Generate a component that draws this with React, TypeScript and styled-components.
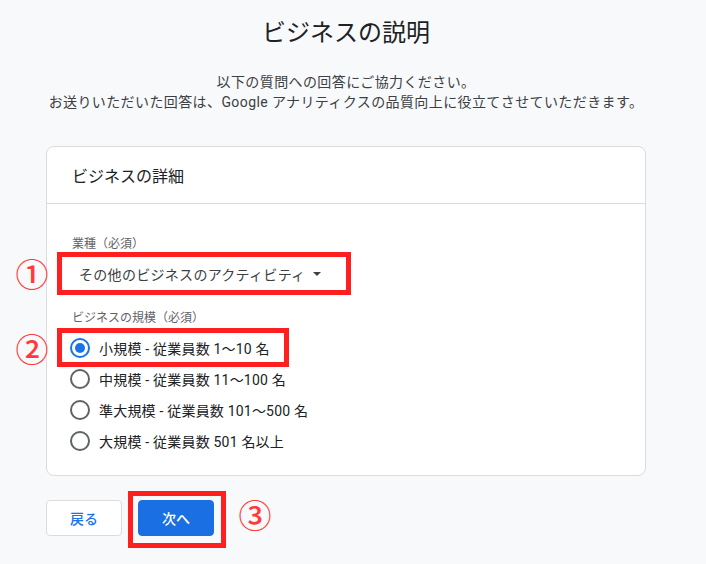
import React from "react";
import styled, { createGlobalStyle } from "styled-components";

const Global = createGlobalStyle`
  html, body { margin: 0; padding: 0; background: #f8f9fa; }
  body {
    font-family: Roboto, "Noto Sans CJK JP", "Noto Sans", sans-serif;
    color: #202124;
  }
  * { box-sizing: border-box; }
`;

const Page = styled.div`
  width: 706px;
  height: 564px;
  padding: 17px 0 0 46px;
  overflow: hidden;
`;

const Column = styled.div`
  width: 600px;
  display: flex;
  flex-direction: column;
`;

const Title = styled.h1`
  margin: 0;
  font-size: 24px;
  line-height: 32px;
  font-weight: 400;
  text-align: center;
  color: #202124;
`;

const Intro = styled.p`
  margin: 23px 0 0;
  font-size: 14px;
  line-height: 20px;
  letter-spacing: 0.4px;
  text-align: center;
  color: #3c4043;
`;

const Card = styled.section`
  margin-top: 34px;
  background: #fff;
  border: 1px solid #dadce0;
  border-radius: 8px;
`;

const CardHeader = styled.div`
  height: 57px;
  display: flex;
  align-items: center;
  padding: 0 25px;
  border-bottom: 1px solid #dadce0;
  font-size: 16px;
  color: #202124;
`;

const CardBody = styled.div`
  padding: 32px 25px 19px;
  display: flex;
  flex-direction: column;
  align-items: flex-start;
`;

const FieldLabel = styled.div<{ $gap?: number }>`
  font-size: 12px;
  line-height: 16px;
  color: #5f6368;
  margin-top: ${(p) => p.$gap ?? 0}px;
`;

const Highlight = styled.div<{ $inset: string; $mt?: number }>`
  position: relative;
  display: flex;
  width: fit-content;
  margin-top: ${(p) => p.$mt ?? 0}px;
  &::after {
    content: "";
    position: absolute;
    inset: ${(p) => p.$inset};
    border: 5px solid #ff1f1f;
    pointer-events: none;
  }
`;

const Marker = styled.span<{ $x: number; $y: number }>`
  position: absolute;
  left: ${(p) => p.$x}px;
  top: ${(p) => p.$y}px;
  transform: translate(-50%, -50%);
  font-family: "Noto Sans CJK JP", sans-serif;
  font-size: 33px;
  font-weight: 500;
  line-height: 1;
  color: #ff3a3a;
  white-space: nowrap;
`;

const Dropdown = styled.button`
  height: 36px;
  display: flex;
  align-items: center;
  gap: 8px;
  padding: 0 20px 0 7px;
  border: none;
  background: transparent;
  font-family: inherit;
  font-size: 14px;
  letter-spacing: 0.3px;
  color: #3c4043;
  cursor: pointer;
`;

const RadioList = styled.div`
  margin: 6px 0 0 -2px;
  display: flex;
  flex-direction: column;
`;

const RadioRow = styled.label`
  height: 31px;
  display: flex;
  align-items: center;
  gap: 9px;
  font-size: 14px;
  letter-spacing: 0.2px;
  color: #202124;
  cursor: pointer;
`;

const RadioCircle = styled.span<{ $checked?: boolean }>`
  width: 20px;
  height: 20px;
  border-radius: 50%;
  border: 2px solid ${(p) => (p.$checked ? "#1a73e8" : "#5f6368")};
  display: flex;
  align-items: center;
  justify-content: center;
  &::after {
    content: "";
    width: 10px;
    height: 10px;
    border-radius: 50%;
    background: ${(p) => (p.$checked ? "#1a73e8" : "transparent")};
  }
`;

const Actions = styled.div`
  margin-top: 24px;
  display: flex;
  gap: 16px;
`;

const Button = styled.button<{ $primary?: boolean }>`
  width: 76px;
  height: 36px;
  border-radius: 4px;
  border: 1px solid ${(p) => (p.$primary ? "#1a6fe3" : "#dadce0")};
  background: ${(p) => (p.$primary ? "#1a6fe3" : "#fff")};
  color: ${(p) => (p.$primary ? "#fff" : "#1a73e8")};
  font-family: inherit;
  font-size: 14px;
  font-weight: 500;
  cursor: pointer;
`;

const sizes = [
  { name: "小規模", detail: "従業員数 1〜10 名" },
  { name: "中規模", detail: "従業員数 11〜100 名" },
  { name: "準大規模", detail: "従業員数 101〜500 名" },
  { name: "大規模", detail: "従業員数 501 名以上" },
];

const Caret = () => (
  <svg width="8" height="4" viewBox="0 0 8 4">
    <path d="M0 0 L8 0 L4 4 Z" fill="#3c4043" />
  </svg>
);

export default function App() {
  const selected = 0;
  return (
    <>
      <Global />
      <Page>
        <Column>
          <Title>ビジネスの説明</Title>
          <Intro>
            以下の質問への回答にご協力ください。
            <br />
            お送りいただいた回答は、Google アナリティクスの品質向上に役立てさせていただきます。
          </Intro>
          <Card>
            <CardHeader>ビジネスの詳細</CardHeader>
            <CardBody>
              <FieldLabel>業種（必須）</FieldLabel>
              <Highlight $inset="-4px -10px -3px -15px" $mt={4}>
                <Dropdown>
                  その他のビジネスのアクティビティ
                  <Caret />
                </Dropdown>
                <Marker $x={-40} $y={17}>①</Marker>
              </Highlight>
              <FieldLabel $gap={18}>ビジネスの規模（必須）</FieldLabel>
              <RadioList>
                {sizes.map((s, i) => {
                  const row = (
                    <RadioRow key={s.name}>
                      <RadioCircle $checked={i === selected} />
                      {s.name} - {s.detail}
                    </RadioRow>
                  );
                  return i === selected ? (
                    <Highlight key={s.name} $inset="-4px -19px -4px -13px">
                      {row}
                      <Marker $x={-38} $y={16}>②</Marker>
                    </Highlight>
                  ) : (
                    row
                  );
                })}
              </RadioList>
            </CardBody>
          </Card>
          <Actions>
            <Button>戻る</Button>
            <Highlight $inset="-9px -12px -12px -10px">
              <Button $primary>次へ</Button>
              <Marker $x={117} $y={14}>③</Marker>
            </Highlight>
          </Actions>
        </Column>
      </Page>
    </>
  );
}
